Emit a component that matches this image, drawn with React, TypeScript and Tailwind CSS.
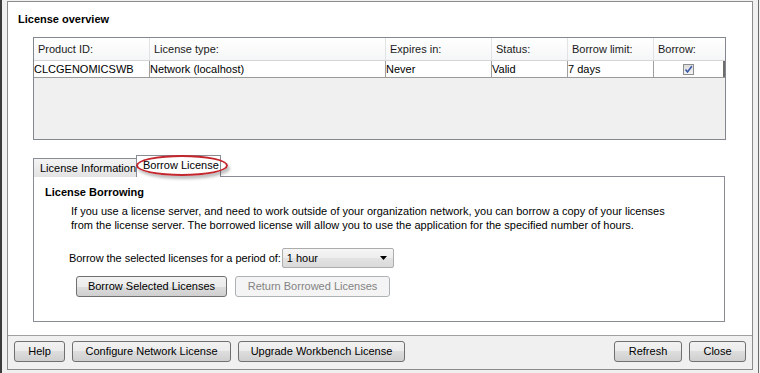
import React from "react";

const font = { fontFamily: '"Liberation Sans", Arial, sans-serif' };

const cols = "grid grid-cols-[116px_236px_106px_76px_86px_1fr]";

const WinButton = ({ label, disabled, className = "" }: { label: string; disabled?: boolean; className?: string }) => (
  <div
    className={`h-[21px] flex items-center justify-center rounded-[3px] border text-[11px] ${
      disabled
        ? "border-[#adb2b5] bg-[#f4f4f4] text-[#838383]"
        : "border-[#707070] bg-[linear-gradient(#f2f2f2_0%,#ebebeb_50%,#dddddd_50%,#cfcfcf_100%)] text-black"
    } ${className}`}
  >
    {label}
  </div>
);

const Check = () => (
  <div className="w-[11px] h-[11px] border border-[#8e8f8f] bg-[linear-gradient(#dcdcdc,#f4f4f4)] flex items-center justify-center">
    <svg width="9" height="9" viewBox="0 0 9 9">
      <path d="M1.5 4.5 L3.5 7 L7.8 1.2" stroke="#3b59a8" strokeWidth="1.6" fill="none" />
    </svg>
  </div>
);

export default function App() {
  const headers = ["Product ID:", "License type:", "Expires in:", "Status:", "Borrow limit:", "Borrow:"];
  const row = ["CLCGENOMICSWB", "Network (localhost)", "Never", "Valid", "7 days"];

  return (
    <div className="w-[760px] h-[373px] bg-[#f0f0f0] flex overflow-hidden text-black" style={font}>
      <div className="w-[2px] h-full bg-[#3c3c3c]" />
      <div className="w-[5px]" />
      <div className="w-[746px] h-[369px] mt-[1px] border border-[#8c8c8c] flex flex-col">
        <div className="flex-1 bg-white border-b border-[#a0a0a0] flex flex-col">
          <div className="h-[35px] pl-[10px] flex items-center text-[11px] font-bold">License overview</div>

          <div className="ml-[25px] w-[693px] h-[103px] border border-[#828790] bg-[#f0f0f0] flex flex-col">
            <div className={`${cols} h-[23px] bg-[linear-gradient(#ffffff,#f5f6f7)] border-b border-[#d5d5d5] text-[11px] text-[#1a1a1a]`}>
              {headers.map((h, i) => (
                <div key={h} className={`flex items-center pl-[4px] ${i < 5 ? "border-r border-[#e2e3e5]" : ""}`}>
                  {h}
                </div>
              ))}
            </div>
            <div className={`${cols} h-[17px] bg-white border-b border-[#9a9a9a] text-[11px]`}>
              {row.map((c) => (
                <div key={c} className="flex items-center border-r border-[#a0a0a0] leading-none">
                  {c}
                </div>
              ))}
              <div className="flex items-center justify-center border-r-2 border-[#6d6d6d]">
                <Check />
              </div>
            </div>
          </div>

          <div className="ml-[25px] mt-[15px] h-[22px] flex items-end relative">
            <div className="w-[104px] h-[19px] border border-b-0 border-[#898c95] bg-[linear-gradient(#f4f4f4,#e3e3e3)] text-[11px] flex items-center pl-[6px]">
              License Information
            </div>
            <div className="w-[85px] h-[22px] border border-b-0 border-[#898c95] bg-white text-[11px] flex items-center pl-[6px] -ml-[1px] relative z-10 pb-[2px]">
              Borrow License
            </div>
            <div className="absolute left-[103px] top-[0px] w-[92px] h-[21px] rounded-[50%] border-2 border-[#c4262e] shadow-[2px_3px_3px_rgba(0,0,0,0.25)] z-20" />
          </div>

          <div className="ml-[25px] w-[692px] h-[146px] -mt-[1px] border border-[#898c95] bg-white flex flex-col text-[11px]">
            <div className="mt-[8px] ml-[11px] font-bold leading-[14px]">License Borrowing</div>
            <div className="mt-[5px] ml-[37px] leading-[14px]">
              If you use a license server, and need to work outside of your organization network, you can borrow a copy of your licenses
              <br />
              from the license server. The borrowed license will allow you to use the application for the specified number of hours.
            </div>
            <div className="mt-[16px] ml-[35px] flex items-center gap-[1px]">
              <span className="tracking-[-0.05px]">Borrow the selected licenses for a period of:</span>
              <div className="w-[112px] h-[20px] border border-[#acacac] rounded-[2px] bg-[linear-gradient(#f6f6f6_0%,#ededed_50%,#e3e3e3_50%,#dadada_100%)] flex items-center justify-between pl-[4px] pr-[6px]">
                <span>1 hour</span>
                <svg width="7" height="4" viewBox="0 0 7 4">
                  <path d="M0 0 H7 L3.5 4 Z" fill="#000" />
                </svg>
              </div>
            </div>
            <div className="mt-[8px] ml-[42px] flex gap-[8px]">
              <WinButton label="Borrow Selected Licenses" className="w-[151px]" />
              <WinButton label="Return Borrowed Licenses" disabled className="w-[155px]" />
            </div>
          </div>
        </div>

        <div className="h-[33px] bg-[#f0f0f0] flex items-start pt-[5px] px-[6px]">
          <WinButton label="Help" className="w-[51px]" />
          <WinButton label="Configure Network License" className="w-[159px] ml-[7px]" />
          <WinButton label="Upgrade Workbench License" className="w-[167px] ml-[7px]" />
          <div className="flex-1" />
          <WinButton label="Refresh" className="w-[68px]" />
          <WinButton label="Close" className="w-[57px] ml-[7px]" />
        </div>
      </div>
      <div className="w-[5px]" />
      <div className="w-[1px] h-full bg-[#6a6a6a]" />
    </div>
  );
}
